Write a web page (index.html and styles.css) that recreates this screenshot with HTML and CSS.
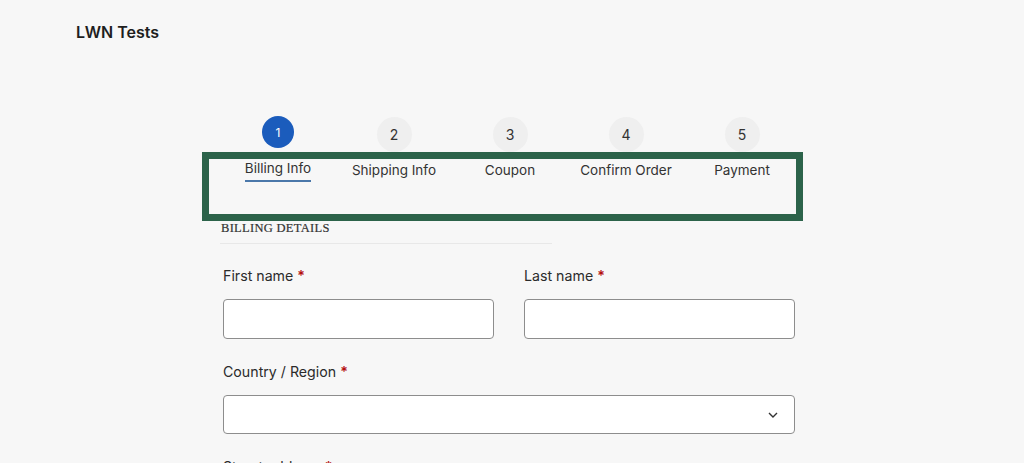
FILE: index.html
```html
<!DOCTYPE html>
<html lang="en">
<head>
<meta charset="utf-8">
<title>LWN Tests</title>
<link rel="stylesheet" href="styles.css">
</head>
<body>
<header class="site-header">
  <div class="site-title">LWN Tests</div>
</header>
<main class="checkout">
  <ol class="steps">
    <li class="step active"><span class="step-num">1</span><span class="step-label">Billing Info</span></li>
    <li class="step"><span class="step-num">2</span><span class="step-label">Shipping Info</span></li>
    <li class="step"><span class="step-num">3</span><span class="step-label">Coupon</span></li>
    <li class="step"><span class="step-num">4</span><span class="step-label">Confirm Order</span></li>
    <li class="step"><span class="step-num">5</span><span class="step-label">Payment</span></li>
  </ol>
  <h3 class="section-title">BILLING DETAILS</h3>
  <form class="billing-form">
    <div class="row two">
      <div class="field">
        <label>First name <abbr>*</abbr></label>
        <div class="input"></div>
      </div>
      <div class="field">
        <label>Last name <abbr>*</abbr></label>
        <div class="input"></div>
      </div>
    </div>
    <div class="field">
      <label>Country / Region <abbr>*</abbr></label>
      <div class="input select">
        <svg class="chev" width="10" height="6" viewBox="0 0 10 6"><path d="M1 1l4 4 4-4" fill="none" stroke="#333" stroke-width="1.4"/></svg>
      </div>
    </div>
    <div class="field">
      <label>Street address <abbr>*</abbr></label>
    </div>
  </form>
</main>
<div class="highlight-box"></div>
</body>
</html>
```

FILE: styles.css
```css
* { box-sizing: border-box; }
html, body { margin: 0; padding: 0; }
body {
  background: #f7f7f7;
  font-family: Inter, "Noto Sans", "Liberation Sans", sans-serif;
  color: #2b2b2b;
  height: 463px;
  overflow: hidden;
  position: relative;
}
.site-header {
  padding: 21px 76px 0;
  height: 116px;
}
.site-title {
  font-size: 16px;
  font-weight: 600;
  line-height: 22px;
  color: #1e1e1e;
}
.checkout {
  width: 580px;
  margin-left: 220px;
}
.steps {
  list-style: none;
  margin: 0;
  padding: 0;
  display: flex;
}
.step {
  flex: 1;
  display: flex;
  flex-direction: column;
  align-items: center;
}
.step-num {
  width: 35px;
  height: 35px;
  border-radius: 50%;
  background: #efefef;
  display: flex;
  align-items: center;
  justify-content: center;
  font-size: 14px;
  color: #333;
  margin-top: 1px;
}
.step.active .step-num {
  width: 32px;
  height: 32px;
  margin-top: 0;
  background: #1b5cbc;
  color: #fff;
  font-size: 12px;
}
.step-label {
  margin-top: 9px;
  font-size: 13.5px;
  line-height: 18px;
  color: #333;
}
.step.active .step-label {
  margin-top: 11px;
  padding-bottom: 3px;
  border-bottom: 2px solid #4b78aa;
}
.section-title {
  margin: 38px 0 0;
  width: 332px;
  padding: 0 0 7px 1px;
  border-bottom: 1px solid #e8e8e8;
  font-family: "Liberation Serif", serif;
  font-weight: normal;
  font-size: 12.5px;
  letter-spacing: 0.3px;
  line-height: 16px;
  color: #333;
  -webkit-text-stroke: 0.2px #333;
}
.billing-form {
  padding: 22px 5px 0 3px;
  display: flex;
  flex-direction: column;
  gap: 23px;
}
.row.two {
  display: grid;
  grid-template-columns: 1fr 1fr;
  column-gap: 30px;
}
.field label {
  display: block;
  font-size: 14.2px;
  line-height: 20px;
  color: #2b2b2b;
  margin-bottom: 13px;
}
.field abbr {
  color: #b40f0f;
  text-decoration: none;
  font-weight: 600;
}
.input {
  height: 40px;
  background: #fff;
  border: 1px solid #8d8d8d;
  border-radius: 4px;
}
.input.select {
  height: 39px;
  display: flex;
  align-items: center;
  justify-content: flex-end;
  padding-right: 16px;
}
.highlight-box {
  position: absolute;
  left: 202px;
  top: 152px;
  width: 601px;
  height: 69px;
  border: 7px solid #2c634a;
}
```
